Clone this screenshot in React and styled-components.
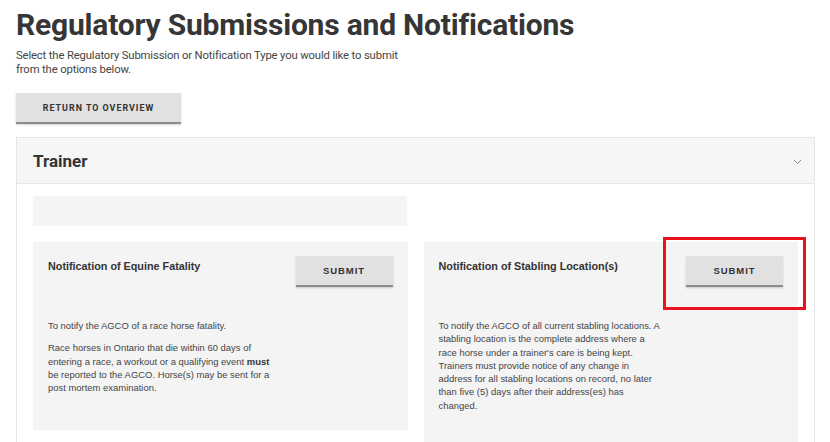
import React from "react";
import styled, { createGlobalStyle } from "styled-components";

const GlobalStyle = createGlobalStyle`
  html, body { margin: 0; padding: 0; background: #ffffff; }
  body { font-family: Roboto, "Liberation Sans", Arial, sans-serif; color: #333; }
  * { box-sizing: border-box; }
`;

const Page = styled.main`
  padding: 0 15px 0 16px;
`;

const Title = styled.h1`
  margin: 7px 0 0;
  font-family: Roboto, "Liberation Sans", sans-serif;
  font-weight: 700;
  font-size: 30px;
  line-height: 35px;
  letter-spacing: -0.2px;
  color: #363636;
`;

const Intro = styled.p`
  margin: 7px 0 0;
  width: 400px;
  font-family: Roboto, "Liberation Sans", sans-serif;
  font-size: 11.3px;
  line-height: 13.5px;
  letter-spacing: -0.15px;
  color: #444;
`;

const ReturnButton = styled.button`
  display: block;
  margin-top: 17px;
  width: 165px;
  height: 31px;
  border: none;
  border-bottom: 2px solid #8c8c8c;
  background: #e1e1e1;
  box-shadow: 0 1px 2px rgba(0, 0, 0, 0.18);
  font-family: Roboto, "Liberation Sans", sans-serif;
  font-weight: 700;
  font-size: 8.9px;
  letter-spacing: 1px;
  color: #333;
  text-transform: uppercase;
  padding: 0;
`;

const Panel = styled.section`
  margin-top: 13px;
  border: 1px solid #e6e6e6;
  border-bottom: none;
`;

const PanelHeader = styled.header`
  display: flex;
  align-items: center;
  justify-content: space-between;
  height: 46px;
  padding: 0 12px 0 16px;
  background: #f6f6f6;
  border-bottom: 1px solid #e6e6e6;
`;

const PanelTitle = styled.h2`
  margin: 0;
  font-family: Roboto, "Liberation Sans", sans-serif;
  font-weight: 700;
  font-size: 17px;
  color: #333;
`;

const Chevron = styled.svg`
  width: 9px;
  height: 6px;
  margin-top: 2px;
`;

const PanelBody = styled.div`
  padding: 12px 16px 0 16px;
  background: #fff;
`;

const Placeholder = styled.div`
  width: 374px;
  height: 30px;
  background: #f4f4f4;
`;

const CardGrid = styled.div`
  display: grid;
  grid-template-columns: 1fr 1fr;
  column-gap: 16px;
  align-items: start;
  margin-top: 16px;
`;

const Card = styled.article`
  background: #f4f4f4;
  padding: 14px 15px 36px;
  font-family: "Liberation Sans", Arial, sans-serif;
`;

const CardHead = styled.div`
  display: flex;
  align-items: flex-start;
  justify-content: space-between;
`;

const CardTitle = styled.h3`
  margin: 3px 0 0;
  font-weight: 700;
  font-size: 10.8px;
  line-height: 14px;
  color: #333;
`;

const ButtonWrap = styled.div`
  position: relative;
  flex: none;
`;

const SubmitButton = styled.button`
  display: block;
  width: 97px;
  height: 31px;
  padding: 0;
  border: none;
  border-bottom: 2px solid #8c8c8c;
  background: #e1e1e1;
  box-shadow: 0 1px 2px rgba(0, 0, 0, 0.18);
  font-family: "Liberation Sans", Arial, sans-serif;
  font-weight: 700;
  font-size: 9.5px;
  letter-spacing: 0.9px;
  color: #333;
`;

const Highlight = styled.span`
  position: absolute;
  left: -23px;
  right: -23px;
  top: -19px;
  bottom: -23px;
  border: 3px solid #e8131f;
  pointer-events: none;
`;

const Description = styled.div`
  width: 225.5px;
  margin-top: 32px;
  font-size: 9.45px;
  line-height: 13.3px;
  color: #444;

  p { margin: 0; }
  p + p { margin-top: 9px; }
  strong { color: #333; }
`;

const cards = [
  {
    title: "Notification of Equine Fatality",
    body: [
      "To notify the AGCO of a race horse fatality.",
      <>
        Race horses in Ontario that die within 60 days of entering a race, a
        workout or a qualifying event <strong>must</strong> be reported to the
        AGCO. Horse(s) may be sent for a post mortem examination.
      </>,
    ],
  },
  {
    title: "Notification of Stabling Location(s)",
    highlighted: true,
    body: [
      "To notify the AGCO of all current stabling locations. A stabling location is the complete address where a race horse under a trainer's care is being kept. Trainers must provide notice of any change in address for all stabling locations on record, no later than five (5) days after their address(es) has changed.",
    ],
  },
];

export default function App() {
  return (
    <>
      <GlobalStyle />
      <Page>
        <Title>Regulatory Submissions and Notifications</Title>
        <Intro>
          Select the Regulatory Submission or Notification Type you would like
          to submit from the options below.
        </Intro>
        <ReturnButton>Return to Overview</ReturnButton>
        <Panel>
          <PanelHeader>
            <PanelTitle>Trainer</PanelTitle>
            <Chevron viewBox="0 0 9 6" fill="none">
              <polyline points="1,1 4.5,4.5 8,1" stroke="#888" strokeWidth="1" />
            </Chevron>
          </PanelHeader>
          <PanelBody>
            <Placeholder />
            <CardGrid>
              {cards.map((c) => (
                <Card key={c.title}>
                  <CardHead>
                    <CardTitle>{c.title}</CardTitle>
                    <ButtonWrap>
                      <SubmitButton>SUBMIT</SubmitButton>
                      {c.highlighted && <Highlight />}
                    </ButtonWrap>
                  </CardHead>
                  <Description>
                    {c.body.map((b, i) => (
                      <p key={i}>{b}</p>
                    ))}
                  </Description>
                </Card>
              ))}
            </CardGrid>
          </PanelBody>
        </Panel>
      </Page>
    </>
  );
}
